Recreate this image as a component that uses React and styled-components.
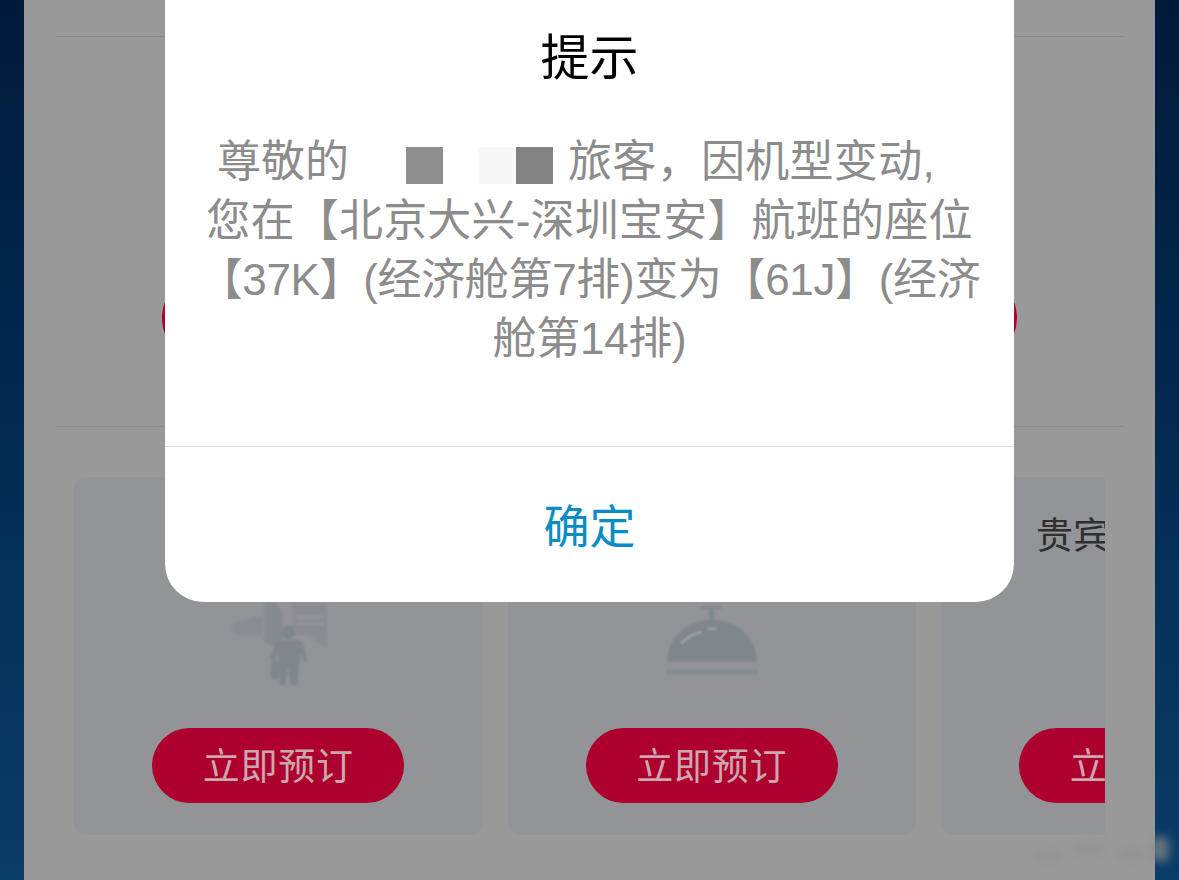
import React from 'react'
import styled, { createGlobalStyle } from 'styled-components'

const GlobalStyle = createGlobalStyle`
  html, body {
    margin: 0;
    padding: 0;
    height: 100%;
    overflow: hidden;
  }
  body {
    font-family: "Liberation Sans", "Noto Sans CJK SC", sans-serif;
  }
  * {
    box-sizing: border-box;
  }
`

const DoorIcon = () => (
  <IconSvg width="98" height="90" viewBox="0 0 98 90">
    <g fill="#848a8e">
      <path d="M2 27c2-5 10-7 15-7 2-2 9-3 16-4v20H14C7 36 2 32 2 27z" opacity=".7" />
      <path d="M35 3h13l5 8v28l-8 7-10-4z" opacity=".9" />
      <path d="M63 3h35v46L80 36H63z" opacity=".7" />
    </g>
    <path d="M68 17h26M68 24h26" stroke="#93969a" strokeWidth="3" fill="none" />
    <g fill="#7f878b">
      <circle cx="59" cy="32" r="7" />
      <path d="M51 40h17c3 0 5 2 6 5l5 15-4 2-4-9-1 14-2 18h-6l-3-18-3 18h-5l-1-20-1-13-3 8-5-1 5-14c1-3 3-5 5-5z" />
      <rect x="42" y="61" width="8" height="18" rx="3" />
    </g>
  </IconSvg>
)

const BellIcon = () => (
  <IconSvg width="92" height="90" viewBox="0 -3 92 90">
    <g fill="#7f878b">
      <rect x="35" y="3" width="20" height="3" />
      <rect x="43" y="6" width="5" height="12" />
      <path d="M1 59c0-24 19-42 45-42s45 18 45 42z" />
      <rect x="1" y="66" width="90" height="6" opacity=".7" />
    </g>
    <path d="M16 40c5-6 11-9 19-11" fill="none" stroke="#a5aaad" strokeWidth="2" strokeLinecap="round" />
    <path d="M42 26h8" fill="none" stroke="#a5aaad" strokeWidth="2" strokeLinecap="round" />
  </IconSvg>
)

const Smudge = () => (
  <WatermarkSvg width="180" height="60" viewBox="0 0 180 60">
    <g fill="#8d8d8f">
      <ellipse cx="40" cy="36" rx="14" ry="6" opacity=".45" />
      <ellipse cx="80" cy="29" rx="18" ry="4" opacity=".55" />
      <ellipse cx="122" cy="34" rx="14" ry="5" opacity=".55" />
      <ellipse cx="150" cy="29" rx="9" ry="13" opacity=".7" />
    </g>
    <ellipse cx="158" cy="29" rx="5" ry="15" fill="#55687c" opacity=".6" />
  </WatermarkSvg>
)

const App = () => {
  return (
    <>
      <GlobalStyle />
      <Page>
        <Sheet>
          <Rule />
          <UpperSection>
            <WidePill />
          </UpperSection>
          <Rule />
          <Carousel>
            <Card>
              <CardTitle />
              <IconSlot><DoorIcon /></IconSlot>
              <BookButton>立即预订</BookButton>
            </Card>
            <Card>
              <CardTitle />
              <IconSlot><BellIcon /></IconSlot>
              <BookButton>立即预订</BookButton>
            </Card>
            <Card>
              <CardTitle>贵宾</CardTitle>
              <IconSlot />
              <BookButton>立即预订</BookButton>
            </Card>
          </Carousel>
          <Dialog>
            <DialogTitle>提示</DialogTitle>
            <DialogBody>
              <Line $inset={27}>
                尊敬的
                <Redact $tone="#8f8f8f" $left={57} />
                <Redact $tone="#f7f7f7" $left={36} />
                <Redact $tone="#828282" />
                <AfterRedact>旅客，因机型变动,</AfterRedact>
              </Line>
              <Line $track={0.2}>您在【北京大兴-深圳宝安】航班的座位</Line>
              <Line $track={-0.35}>【37K】(经济舱第7排)变为【61J】(经济</Line>
              <Line $track={-0.3}>舱第14排)</Line>
            </DialogBody>
            <DialogFooter>
              <ConfirmButton>确定</ConfirmButton>
            </DialogFooter>
          </Dialog>
          <Smudge />
        </Sheet>
      </Page>
    </>
  )
}

export default App

const Page = styled.div`
  width: 1179px;
  height: 880px;
  padding: 0 24px;
  overflow: hidden;
  background: linear-gradient(180deg, #001a3a 0%, #02294f 45%, #0a3c68 100%);
`

const Sheet = styled.div`
  position: relative;
  width: 1131px;
  height: 880px;
  padding: 36px 31px 0;
  background: #999999;
`

const Rule = styled.div`
  height: 1px;
  background: #8b8b8b;
`

const UpperSection = styled.div`
  height: 389px;
  padding-top: 236px;
  display: flex;
  justify-content: center;
  align-items: flex-start;
`

const WidePill = styled.div`
  width: 855px;
  height: 90px;
  border-radius: 45px;
  background: #ad0030;
`

const Carousel = styled.div`
  width: 1031px;
  margin: 50px 0 0 19px;
  display: flex;
  gap: 25px;
  overflow: hidden;
`

const Card = styled.div`
  flex: 0 0 408.5px;
  height: 358px;
  padding-top: 39px;
  border-radius: 12px;
  background: #939498;
  display: flex;
  flex-direction: column;
  align-items: center;
`

const CardTitle = styled.div`
  align-self: flex-start;
  margin-left: 95px;
  height: 42px;
  font-size: 37px;
  line-height: 42px;
  white-space: nowrap;
  color: #2f2f2f;
`

const IconSlot = styled.div`
  height: 92px;
  margin-top: 42px;
  display: flex;
  align-items: flex-start;
  justify-content: center;
`

const IconSvg = styled.svg`
  display: block;
  flex: none;
  filter: blur(0.8px);
`

const BookButton = styled.div`
  width: 252px;
  height: 75px;
  margin-top: 36px;
  border-radius: 38px;
  background: #ad002e;
  color: #cba8b0;
  font-size: 37px;
  line-height: 79px;
  letter-spacing: 0.7px;
  text-align: center;
  white-space: nowrap;
`

const Dialog = styled.div`
  position: absolute;
  top: -40px;
  left: 141px;
  width: 849px;
  height: 642px;
  padding-top: 40px;
  border-radius: 38px;
  background: #ffffff;
  display: flex;
  flex-direction: column;
`

const DialogTitle = styled.div`
  height: 116px;
  font-size: 49px;
  line-height: 116px;
  text-align: center;
  color: #000000;
`

const DialogBody = styled.div`
  height: 330px;
  padding-top: 16px;
  font-size: 44px;
  line-height: 59px;
  text-align: center;
  color: #8c8c8c;
`

const Line = styled.div`
  height: 59px;
  white-space: nowrap;
  padding-right: ${props => props.$inset || 0}px;
  letter-spacing: ${props => props.$track || 0}px;
`

const Redact = styled.span`
  display: inline-block;
  width: 37px;
  height: 37px;
  margin-left: ${props => props.$left || 0}px;
  vertical-align: -7px;
  background: ${props => props.$tone};
`

const AfterRedact = styled.span`
  margin-left: 15px;
  letter-spacing: 0.3px;
`

const DialogFooter = styled.div`
  flex: 1;
  padding-top: 4px;
  border-top: 1px solid #dcdcdc;
  display: flex;
  justify-content: center;
  align-items: center;
`

const ConfirmButton = styled.div`
  font-size: 46px;
  line-height: 60px;
  color: #0a8cc4;
`

const WatermarkSvg = styled.svg`
  position: absolute;
  left: 985px;
  top: 820px;
  filter: blur(4px);
`
